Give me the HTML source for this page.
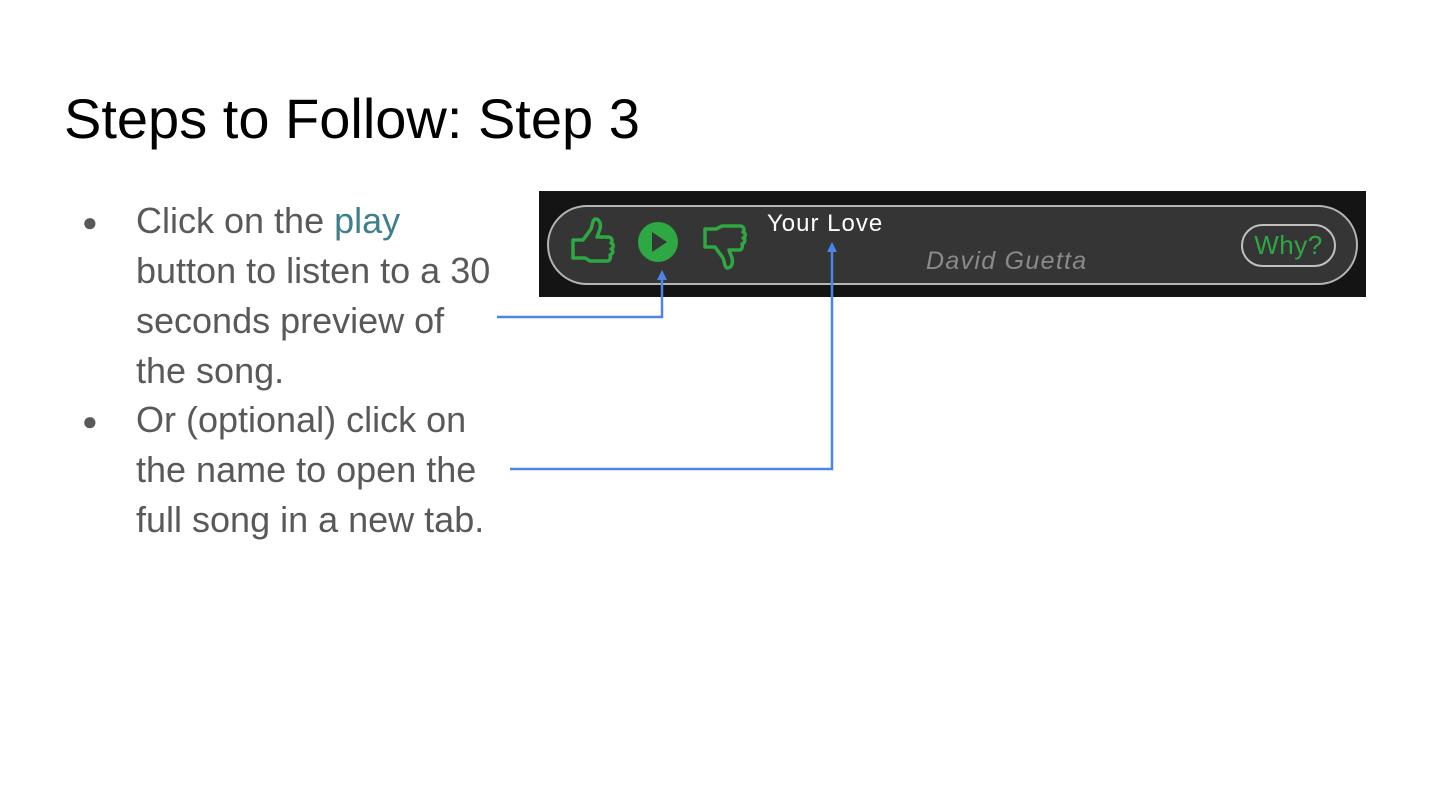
<!DOCTYPE html>
<html><head><style>
body{margin:0;width:1440px;height:810px;background:#fff;position:relative;overflow:hidden;font-family:"Liberation Sans",sans-serif}
.t{position:absolute;left:64px;top:84px;font-size:56px;color:#000;white-space:nowrap;line-height:70px}
.l{position:absolute;left:136px;font-size:36px;color:#595959;white-space:nowrap;line-height:50px}
.b{position:absolute;left:82px;font-size:26px;color:#595959;line-height:50px}
.dark{position:absolute;left:539px;top:191px;width:827px;height:106px;background:#141414}
.pill{position:absolute;left:547px;top:205px;width:807px;height:76px;border:2px solid #b5b5b5;border-radius:40px;background:#353535}
.why{position:absolute;left:1241px;top:224px;width:91px;height:39px;border:2px solid #c0c0c0;border-radius:22px;color:#2ea843;font-size:26px;text-align:center;line-height:39px;letter-spacing:0.5px}
</style></head><body>
<div class="t">Steps to Follow: Step 3</div>
<div class="b" style="top:197px">●</div>
<div class="l" style="top:196px">Click on the <span style="color:#3d7f8c">play</span></div>
<div class="l" style="top:246px">button to listen to a 30</div>
<div class="l" style="top:296px">seconds preview of</div>
<div class="l" style="top:346px">the song.</div>
<div class="b" style="top:396px">●</div>
<div class="l" style="top:395px">Or (optional) click on</div>
<div class="l" style="top:445px">the name to open the</div>
<div class="l" style="top:495px">full song in a new tab.</div>
<div class="dark"></div>
<div class="pill"></div>
<div style="position:absolute;left:767px;top:210px;color:#fff;font-size:24px;letter-spacing:1px">Your Love</div>
<div style="position:absolute;left:926px;top:247px;color:#8a8a8a;font-size:25px;font-style:italic;letter-spacing:1.3px">David Guetta</div>
<div class="why">Why?</div>
<svg style="position:absolute;left:0;top:0" width="1440" height="810">
<g fill="none" stroke="#2ea843" stroke-width="3.5" stroke-linejoin="round">
<path d="M573 240h10l8-11c2-5 1-8 4-10 5 0 6 5 5 10l-3 8h11c4 0 5 4 3 6 3 1 3 5 0 6 3 1 2 5-1 6 1 3 0 6-3 6h-17l-5-3h-12z"/>
<path d="M705 229h11l6-3h18c4 0 5 4 3 6 3 1 3 5 0 6 3 1 2 5-1 6 1 3 0 6-3 6h-10l3 8c1 5 0 10-5 10-3-2-2-5-4-10l-8-11h-10z"/>
</g>
<circle cx="658" cy="242" r="20" fill="#2ea843"/>
<path d="M652 232v20l15-10z" fill="#353535"/>
<g stroke="#4a86e8" stroke-width="2.5" fill="none">
<path d="M497 317H662V276"/>
<path d="M510 469H832V248"/>
</g>
<path d="M657 280l5-10 5 10z M827 252l5-10 5 10z" fill="#4a86e8"/>
</svg>
</body></html>
